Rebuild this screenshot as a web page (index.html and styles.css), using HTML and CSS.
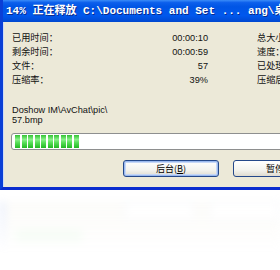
FILE: index.html
```html
<!DOCTYPE html>
<html lang="zh-CN">
<head>
  <meta charset="UTF-8">
  <title>正在释放</title>
  <link rel="stylesheet" href="styles.css">
</head>
<body>

  <div class="window">
    <div class="titlebar">14% 正在释放 C:\Documents and Set ... ang\桌面</div>

    <div class="content">
      <div class="stats">
        <span class="label">已用时间：</span><span class="value">00:00:10</span><span class="label side">总大小：</span>
        <span class="label">剩余时间：</span><span class="value">00:00:59</span><span class="label side">速度：</span>
        <span class="label">文件：</span><span class="value">57</span><span class="label side">已处理：</span>
        <span class="label">压缩率：</span><span class="value">39%</span><span class="label side">压缩后：</span>
      </div>

      <div class="filename">Doshow IM\AvChat\pic\<br>57.bmp</div>

      <div class="progress">
        <span class="block"></span><span class="block"></span><span class="block"></span><span class="block"></span><span class="block"></span>
        <span class="block"></span><span class="block"></span><span class="block"></span><span class="block"></span><span class="block"></span>
      </div>

      <div class="buttons">
        <button class="btn focused">后台(<u>B</u>)</button>
        <button class="btn">暂停(<u>P</u>)</button>
      </div>
    </div>
  </div>

  <!-- mirrored, blurred copy of the dialog's lower half -->
  <div class="reflection" aria-hidden="true">
    <div class="r-body">
      <div class="r-buttons">
        <span class="r-btn"></span><span class="r-btn"></span>
      </div>
      <div class="r-bar"></div>
    </div>
  </div>

</body>
</html>
```

FILE: styles.css
```css
body {
  margin: 0;
  width: 280px;
  height: 270px;
  overflow: hidden;
  background: #fff;
  font-family: "Liberation Sans", "Noto Sans CJK SC", sans-serif;
  font-size: 9.2px;
  color: #111;
}

.window {
  width: 380px;
  border-left: 3px solid #0a3fd6;
  border-bottom: 3px solid #0a2ccf;
}

.titlebar {
  height: 22px;
  line-height: 22px;
  padding-left: 3px;
  white-space: nowrap;
  overflow: hidden;
  color: #fff;
  font-family: "Liberation Mono", "Noto Sans CJK SC", monospace;
  font-weight: bold;
  font-size: 11px;
  background: linear-gradient(#3a8cf8 0%, #0c5fec 12%, #0055e5 30%, #0058ee 70%, #0048d0 100%);
  text-shadow: 1px 1px 0 #0a2a8a;
}

.content {
  height: 156px;
  padding: 9px 0 0 9px;
  background: #ece9d8;
  box-shadow: inset 1px 0 0 #cfdcf6;
}

.stats {
  display: grid;
  grid-template-columns: 150px 46px auto;
  line-height: 14px;
}

.value {
  text-align: right;
}

.side {
  margin-left: 49px;
  white-space: nowrap;
}

.filename {
  margin-top: 18px;
  line-height: 10px;
}

.progress {
  display: flex;
  gap: 1.5px;
  align-items: center;
  height: 15px;
  margin: 8px 0 0 -1px;
  padding: 0 3px;
  background: #fff;
  border: 1px solid #8e8f8f;
  border-radius: 3px;
}

.block {
  width: 5px;
  height: 13px;
  background: linear-gradient(#33c233 0%, #8af08a 35%, #55dd55 60%, #22b822 100%);
}

.buttons {
  display: flex;
  gap: 14px;
  margin: 10px 0 0 111px;
}

.btn {
  width: 96px;
  height: 17px;
  padding: 0;
  font-family: "Noto Sans CJK SC", "Liberation Sans", sans-serif;
  font-size: 9px;
  line-height: 15px;
  color: #000;
  border: 1px solid #24488a;
  border-radius: 3px;
  background: linear-gradient(#fff 0%, #f3f3ee 60%, #dedbd0 100%);
}

.focused {
  box-shadow: inset 0 0 0 1px #9ab9ef, inset 0 0 0 2px #c6d7f6;
}

.reflection {
  height: 80px;
  overflow: hidden;
  opacity: 0.18;
  filter: blur(4px);
  -webkit-mask-image: linear-gradient(#000 0%, rgba(0, 0, 0, 0.5) 45%, transparent 80%);
}

.r-body {
  height: 80px;
  padding-left: 9px;
  background: #ece9d8;
  border-left: 5px solid #5f86f0;
}

.r-buttons {
  display: flex;
  gap: 14px;
  margin: 12px 0 0 110px;
}

.r-btn {
  width: 96px;
  height: 17px;
  border: 1px solid #8096c0;
  border-radius: 3px;
  background: #fff;
}

.r-bar {
  width: 66px;
  height: 13px;
  margin: 10px 0 0 2px;
  background: #6fdc6f;
}
```
